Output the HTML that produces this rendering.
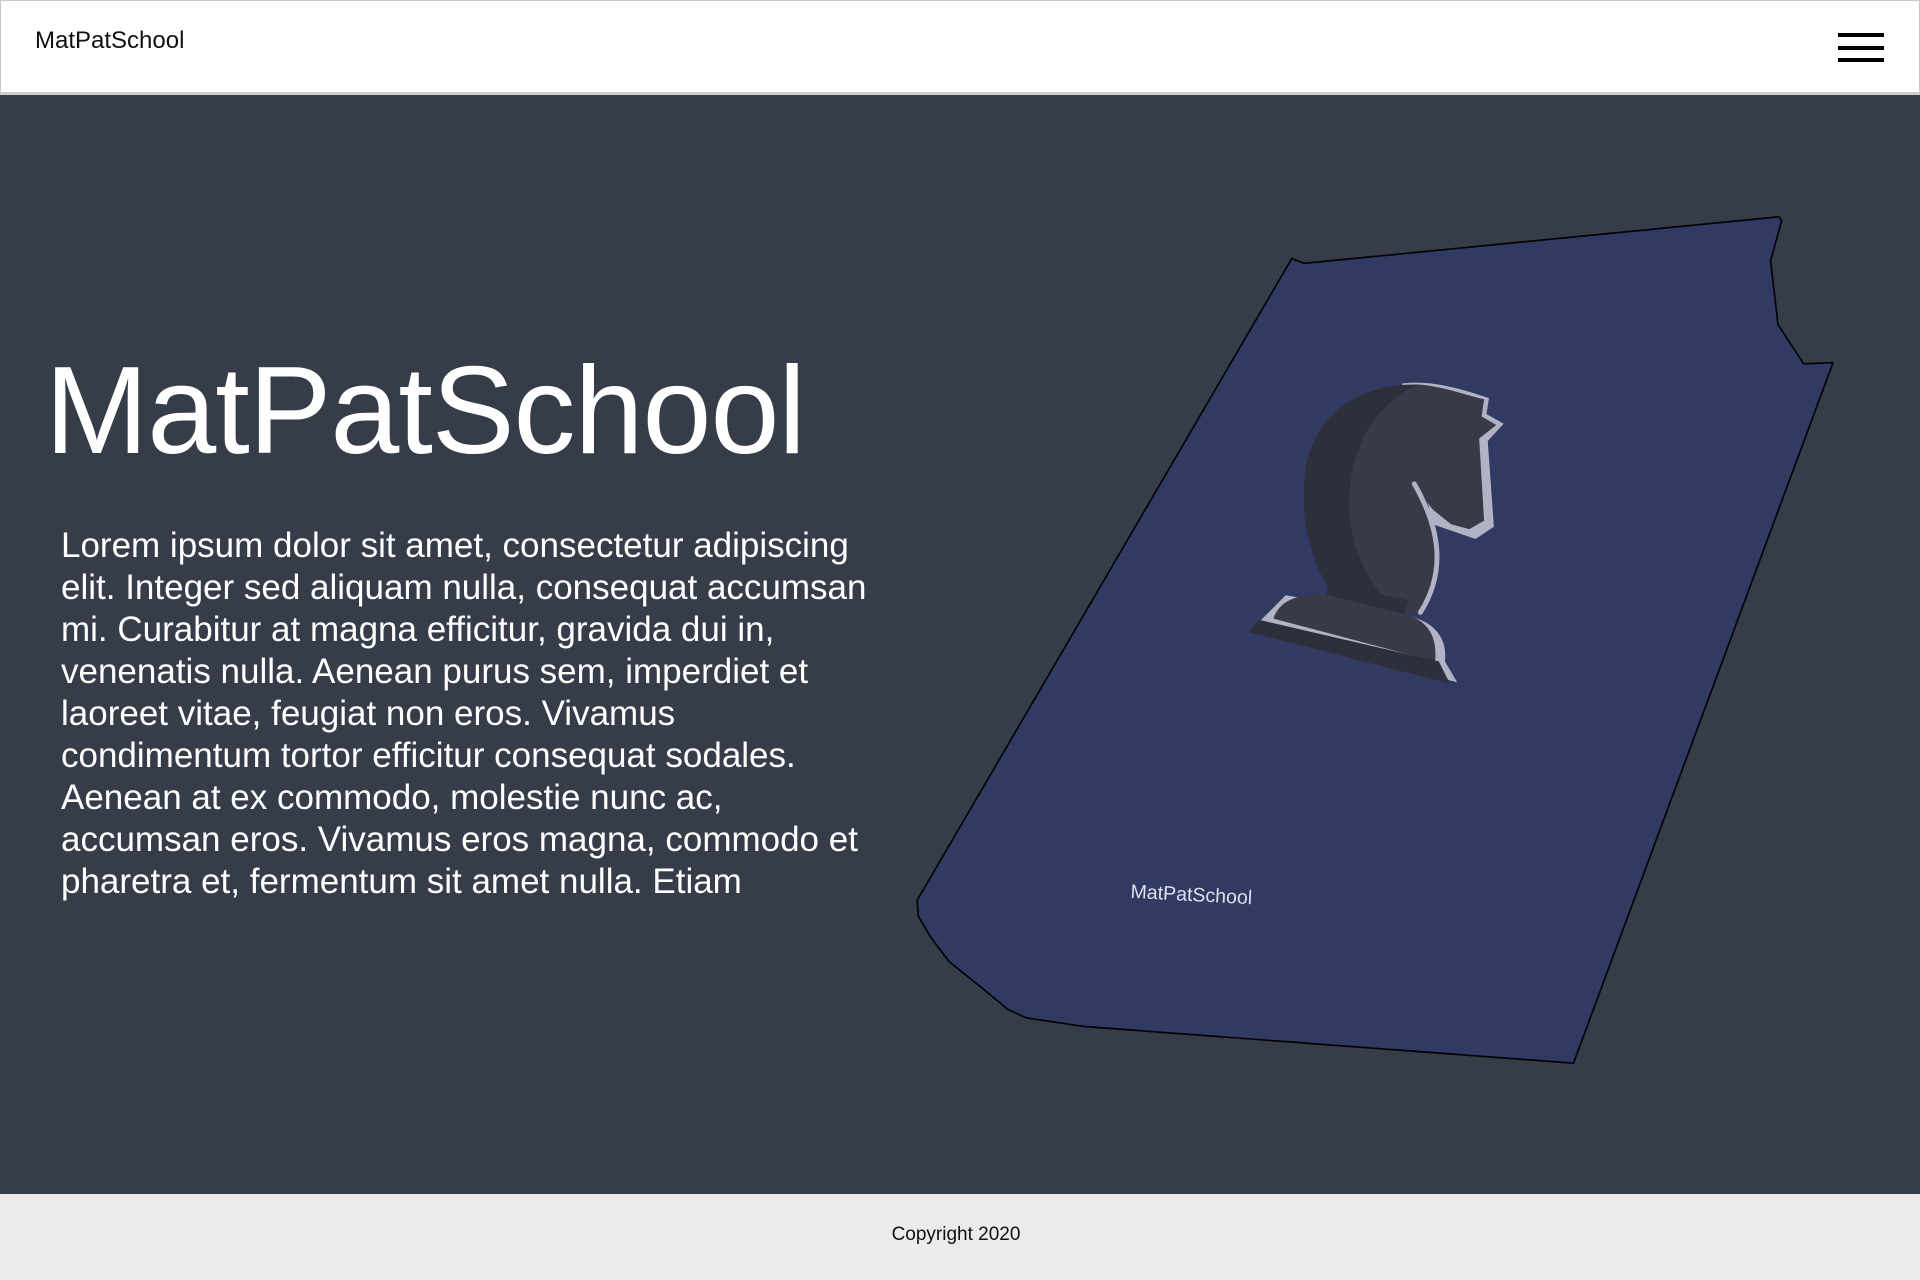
<!DOCTYPE html>
<html><head><meta charset="utf-8"><style>
*{margin:0;padding:0;box-sizing:border-box}
body{width:1920px;height:1280px;overflow:hidden;font-family:"Liberation Sans",sans-serif;background:#363c48;position:relative}
.hdr{position:absolute;left:0;top:0;width:1920px;height:95px;background:#fff;border:1px solid #c8c8c8;border-bottom:3px solid #cfcfcf}
.brand{position:absolute;left:34px;top:26px;font-size:24px;color:#111}
.hb{position:absolute;left:1837px;width:46px;height:4px;background:#000}
h1{position:absolute;left:45px;top:340px;font-size:124px;font-weight:400;color:#fff;letter-spacing:-1px;white-space:nowrap}
p{position:absolute;left:61px;top:525px;width:825px;font-size:35px;line-height:42px;color:#fff}
.ft{position:absolute;left:0;top:1194px;width:1920px;height:86px;background:#ebebeb;text-align:center;font-size:19px;line-height:82px;color:#111;padding-right:8px}
svg{position:absolute;left:0;top:0}
</style></head><body>
<div class="hdr"><div class="brand">MatPatSchool</div>
<div class="hb" style="top:32px"></div><div class="hb" style="top:45px"></div><div class="hb" style="top:57px"></div></div>
<svg width="1920" height="1280" viewBox="0 0 1568 1045" preserveAspectRatio="none">
<path d="M1055,211 L1065,215 L1453,177 L1455,180 L1446,213 L1452,265 L1473,297 L1497,296 L1285,868 L885,838 L838,831 L823,824 L800,805 L775,785 L760,765 L750,748 L749,735 Z" fill="#303a62" stroke="#000" stroke-width="1.3"/>
<path d="M1145,313 C1170,310 1195,318 1216,325 L1214,338 L1228,346 L1215,360 L1220,430 L1205,440 L1170,428 Z" fill="#b0b3c4"/>
<path d="M1050,486 L1150,503 C1175,508 1182,525 1180,540 L1190,557 L1023,513 Z" fill="#b0b3c4"/>
<path d="M1065,400 C1065,340 1110,312 1160,314 C1120,330 1100,370 1102,420 C1105,450 1118,478 1140,498 L1088,486 C1072,460 1063,430 1065,400 Z" fill="#2d303b"/>
<path d="M1160,314 C1180,316 1195,322 1212,326 L1210,340 L1222,347 L1208,358 L1212,425 L1200,432 L1185,428 L1170,416 C1158,400 1160,392 1155,398 C1175,440 1180,470 1160,500 L1140,498 C1118,478 1105,450 1102,420 C1100,370 1120,330 1160,314 Z" fill="#383a47"/>
<path d="M1155,395 C1175,430 1182,465 1160,500" fill="none" stroke="#b0b3c4" stroke-width="4" stroke-linecap="round"/>
<path d="M1085,476 L1150,490 L1146,507 L1082,494 Z" fill="#2d303b"/>
<path d="M1040,505 C1045,490 1060,484 1085,486 L1148,502 C1166,506 1174,520 1172,540 Z" fill="#383a47"/>
<path d="M1028,506 L1175,540 L1184,558 L1020,516 Z" fill="#2d303b"/>
<text x="923" y="733" font-family="Liberation Sans, sans-serif" font-size="16" fill="#dde0ea" transform="rotate(3 923 733)">MatPatSchool</text>
</svg>
<h1>MatPatSchool</h1>
<p>Lorem ipsum dolor sit amet, consectetur adipiscing elit. Integer sed aliquam nulla, consequat accumsan mi. Curabitur at magna efficitur, gravida dui in, venenatis nulla. Aenean purus sem, imperdiet et laoreet vitae, feugiat non eros. Vivamus condimentum tortor efficitur consequat sodales. Aenean at ex commodo, molestie nunc ac, accumsan eros. Vivamus eros magna, commodo et pharetra et, fermentum sit amet nulla. Etiam</p>
<div class="ft">Copyright 2020</div>
</body></html>
